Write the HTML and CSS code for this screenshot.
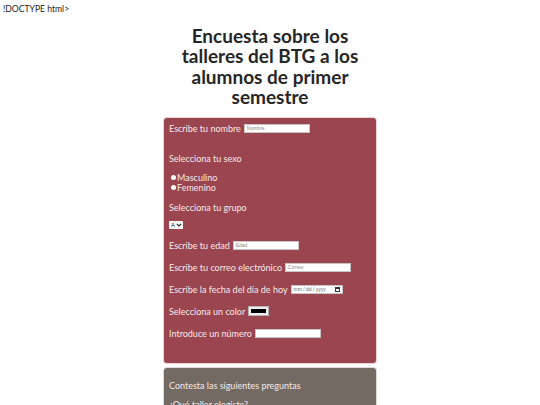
FILE: index.html
```html
<!DOCTYPE html>
<html lang="es">
<head>
<meta charset="utf-8">
<title>Encuesta</title>
<link rel="stylesheet" href="styles.css">
</head>
<body>
<div class="doctype">!DOCTYPE html&gt;</div>
<h1 class="title">Encuesta sobre los talleres del BTG a los alumnos de primer semestre</h1>
<form class="card card-red">
  <div class="row r-nombre">Escribe tu nombre <span class="field w66">Nombre</span></div>
  <div class="row r-sexo">Selecciona tu sexo</div>
  <div class="radio r-masc"><span class="dot"></span>Masculino</div>
  <div class="radio"><span class="dot"></span>Femenino</div>
  <div class="row r-grupo">Selecciona tu grupo</div>
  <div class="row r-select"><span class="select">A<svg width="6" height="4" viewBox="0 0 6 4"><path d="M0.8 0.8 L3 3 L5.2 0.8" fill="none" stroke="#222" stroke-width="1.1"/></svg></span></div>
  <div class="row r-edad">Escribe tu edad <span class="field w66">Edad</span></div>
  <div class="row r-gap">Escribe tu correo electrónico <span class="field w66">Correo</span></div>
  <div class="row r-gap">Escribe la fecha del día de hoy <span class="field date">mm / dd / yyyy<span class="cal"></span></span></div>
  <div class="row r-gap">Selecciona un color <span class="color"><span class="swatch"></span></span></div>
  <div class="row r-gap">Introduce un número <span class="field w66"></span></div>
</form>
<div class="card card-gray">
  <div class="row g-first">Contesta las siguientes preguntas</div>
  <div class="row g-second">¿Qué taller elegiste?</div>
</div>
</body>
</html>
```
FILE: styles.css
```css
html, body {
  margin: 0;
  padding: 0;
  background: #ffffff;
  font-family: Lato, "DejaVu Sans", sans-serif;
  overflow: hidden;
}
.doctype {
  font-size: 8.6px;
  color: #222;
  padding: 4px 0 0 3px;
  line-height: 10px;
}
.title {
  width: 200px;
  margin: 12px auto 0;
  text-align: center;
  font-size: 19px;
  line-height: 20.3px;
  font-weight: 700;
  color: #262626;
}
.card {
  width: 212px;
  margin: 0 auto;
  box-sizing: border-box;
  padding: 0 5px;
  border-radius: 3px;
  color: #f6e9e9;
  font-size: 9px;
}
.card-red {
  margin-top: 11px;
  background: #9a4550;
  padding-top: 4px;
  padding-bottom: 24px;
  box-shadow: 0 0 0 1px #e9d4d6;
}
.card-gray {
  margin-top: 5px;
  background: #736b63;
  padding-top: 11px;
  height: 60px;
  box-shadow: 0 0 0 1px #dddad6;
}
.row {
  display: flex;
  align-items: center;
  height: 12px;
  gap: 3px;
  white-space: nowrap;
}
.r-sexo { margin-top: 18px; }
.r-masc { margin-top: 8px; }
.r-grupo { margin-top: 9px; }
.r-select { margin-top: 7px; height: 10px; }
.r-edad { margin-top: 9px; }
.r-gap { margin-top: 10px; }
.g-second { margin-top: 7px; }
.radio {
  display: flex;
  align-items: center;
  height: 10px;
  padding-left: 2px;
  gap: 1px;
}
.dot {
  width: 5px;
  height: 5px;
  border-radius: 50%;
  background: #ffffff;
}
.field {
  display: inline-flex;
  align-items: center;
  box-sizing: border-box;
  height: 9px;
  background: #ffffff;
  border: 1px solid #c9c4c4;
  color: #8a8a8a;
  font-size: 5px;
  padding-left: 2px;
  font-family: "Liberation Sans", Arial, sans-serif;
}
.w66 { width: 66px; }
.date {
  width: 52px;
  color: #666;
  font-size: 5px;
  justify-content: space-between;
  padding-right: 2px;
}
.cal {
  width: 5px;
  height: 5px;
  box-sizing: border-box;
  border: 1px solid #333;
  border-top-width: 2px;
}
.select {
  display: inline-flex;
  align-items: center;
  gap: 1px;
  box-sizing: border-box;
  height: 8px;
  padding: 0 1px 0 2px;
  background: #ffffff;
  border-radius: 1px;
  color: #222;
  font-size: 6px;
  font-family: "Liberation Sans", Arial, sans-serif;
}
.color {
  display: inline-flex;
  box-sizing: border-box;
  width: 21px;
  height: 10px;
  padding: 2px;
  background: #efefef;
  border: 1px solid #b9b3b3;
}
.swatch {
  flex: 1;
  background: #000;
}
```
